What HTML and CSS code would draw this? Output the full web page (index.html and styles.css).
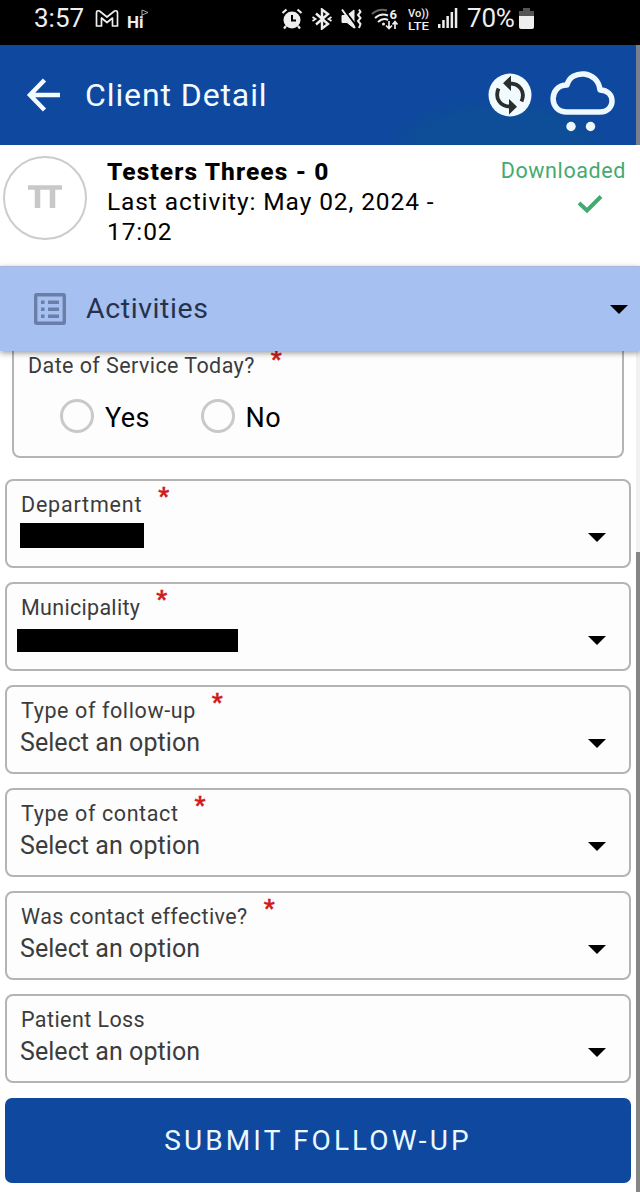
FILE: index.html
```html
<!DOCTYPE html>
<html lang="en">
<head>
<meta charset="utf-8">
<title>Client Detail</title>
<link rel="stylesheet" href="styles.css">
</head>
<body>
<div class="status">
  <span class="clock">3:57</span>
  <svg class="gmail" width="24" height="19" viewBox="0 0 24 19" fill="none" stroke="#eee" stroke-width="1.7" stroke-linejoin="round"><path d="M1.5 17V4Q1.500 1 4.500 2L12 8L19.500 2Q22.500 1 22.500 4V17H17.500V9L12 13.500L6.500 9V17Z"/></svg>
  <span class="hi">Hi<svg class="flag" width="8" height="10" viewBox="0 0 8 10" fill="none" stroke="#aaa"><path d="M1 10V1L7 3.500L1 6"/></svg></span>
  <div class="signals">
    <svg width="22" height="22" viewBox="0 0 22 22"><circle cx="11" cy="12" r="8.500" fill="#eee"/><path d="M1.500 5L5.500 1.500M20.500 5L16.500 1.500M5 18L3 20.500M17 18L19 20.500" stroke="#eee" stroke-width="2.200"/><path d="M11 7V12.500H15" fill="none" stroke="#000" stroke-width="2"/></svg>
    <svg width="20" height="22" viewBox="0 0 20 22" fill="none" stroke="#eee" stroke-width="2.400"><path d="M4 5.500L16 16L10 20.500V1.500L16 6L4 16.500"/><path d="M0.500 9L3.500 11L0.500 13M19.500 9L16.500 11L19.500 13" stroke-width="1.800"/></svg>
    <svg width="21" height="22" viewBox="0 0 21 22" fill="none" stroke="#eee"><path d="M1 7.500H6L13 2V20L6 14.500H1Z" fill="#eee"/><path d="M2.500 1L15.500 18" stroke="#000" stroke-width="2"/><path d="M1 1.500L14 20" stroke-width="2"/><path d="M18 1.500L19.500 4L17 7L19.500 10L17 13L19.500 16L18 20" stroke-width="2"/></svg>
    <svg width="28" height="23" viewBox="0 0 28 23" fill="none" stroke="#eee" stroke-width="2"><path d="M1 6Q8 0 16 2.500" stroke="#666"/><path d="M4 10Q10 4.500 17 7.500M7 14Q12 9.500 17 12"/><circle cx="12.500" cy="16" r="1.500" fill="#eee" stroke="none"/><path d="M18 13V20M15 17.500L18 20.500L21 17.500M24 21V14M21.500 16.500L24 13.500L26.500 16.500" stroke-width="1.700"/><text x="18.500" y="11" class="wifi-num">6</text></svg>
    <svg class="volte" width="22" height="28" viewBox="0 0 22 28"><text x="0" y="12" textLength="21" lengthAdjust="spacingAndGlyphs">Vo))</text><text x="0" y="25" textLength="21" lengthAdjust="spacingAndGlyphs">LTE</text></svg>
    <svg class="bars" width="20" height="21" viewBox="0 0 20 21" fill="#eee"><path d="M0 17H2.500V21H0ZM4.200 13H6.700V21H4.200ZM8.400 9H10.900V21H8.400ZM12.600 5H15.100V21H12.600ZM16.800 1H19.300V21H16.800Z"/></svg>
    <span class="percent">70%</span>
    <svg width="15" height="23" viewBox="0 0 15 23"><path d="M4 1H11V4H15V10H0V4H4Z" fill="#555"/><path d="M0 9H15V20Q15 22 13 22H2Q0 22 0 20Z" fill="#eee"/></svg>
  </div>
</div>
<header class="topbar">
  <svg class="back" width="36" height="36" viewBox="0 0 36 36" fill="none" stroke="#f2fbff" stroke-width="4.500"><path d="M19.500 3L5 18L19.500 33M4 18H35"/></svg>
  <h1>Client Detail</h1>
  <svg class="sync" width="44" height="44" viewBox="0 0 44 44"><circle cx="22" cy="22" r="21.500" fill="#f0faff"/><g fill="none" stroke="#2b2e2e" stroke-width="3.800"><path d="M21 10.500C32 10 37.500 19 33.500 28.500"/><path d="M23 33.500C12 34 6.500 25 10.500 15.500"/></g><path d="M23 2.500V18L15 10.300ZM21 26L29 33.700L21 41.500Z" fill="#2b2e2e"/></svg>
  <svg class="cloud" width="66" height="62" viewBox="0 0 66 62"><path d="M17 41H50C66 41 66 19 50 19C48 -1 21 -2 17 14C-1 14 -2 41 17 41Z" fill="none" stroke="#edf8ff" stroke-width="5.500" stroke-linejoin="round"/><circle cx="21" cy="55.500" r="4.700" fill="#edf8ff"/><circle cx="40.500" cy="55.500" r="4.700" fill="#edf8ff"/></svg>
</header>
<section class="client">
  <div class="avatar"><svg width="34" height="24" viewBox="0 0 34 24" fill="none" stroke="#c8c8c8"><path d="M0 2.500H34" stroke-width="4.500"/><path d="M9.500 2V23M24.500 2V23" stroke-width="5.500"/></svg></div>
  <div class="info">
    <div class="name">Testers Threes - 0</div>
    <div class="last">Last activity: May 02, 2024 -<br>17:02</div>
  </div>
  <div class="download">
    <span>Downloaded</span>
    <svg width="26" height="20" viewBox="0 0 26 20" fill="none" stroke="#43aa70" stroke-width="4"><path d="M2 9L10 16.500L24 2.500"/></svg>
  </div>
</section>
<section class="activities">
  <svg width="32" height="32" viewBox="0 0 32 32"><rect x="1.700" y="1.700" width="28.600" height="28.600" rx="1" fill="none" stroke="#6a7fa8" stroke-width="3.400"/><path d="M7 7.500h3.500v3.500h-3.500zM14 7.500h11v3.500h-11zM7 14.500h3.500v3.500h-3.500zM14 14.500h11v3.500h-11zM7 21.500h3.500v3.500h-3.500zM14 21.500h11v3.500h-11z" fill="#6a7fa8"/></svg>
  <h2>Activities</h2>
  <i class="caret"></i>
</section>
<main class="body">
  <form class="form">
    <div class="radio-card">
      <div class="label-row"><span class="label">Date of Service Today?</span><span class="star">*</span></div>
      <div class="options">
        <span class="option"><i class="ring"></i><span>Yes</span></span>
        <span class="option"><i class="ring"></i><span>No</span></span>
      </div>
    </div>
    <div class="field"><div class="label-row"><span class="label wide">Department</span><span class="star">*</span></div><div class="redacted short"></div><i class="caret"></i></div>
    <div class="field"><div class="label-row"><span class="label tight">Municipality</span><span class="star">*</span></div><div class="redacted long"></div><i class="caret"></i></div>
    <div class="field"><div class="label-row"><span class="label loose">Type of follow-up</span><span class="star">*</span></div><div class="value">Select an option</div><i class="caret"></i></div>
    <div class="field"><div class="label-row"><span class="label loose">Type of contact</span><span class="star">*</span></div><div class="value">Select an option</div><i class="caret"></i></div>
    <div class="field"><div class="label-row"><span class="label">Was contact effective?</span><span class="star">*</span></div><div class="value">Select an option</div><i class="caret"></i></div>
    <div class="field"><div class="label-row"><span class="label">Patient Loss</span></div><div class="value">Select an option</div><i class="caret"></i></div>
    <button class="submit" type="button">SUBMIT FOLLOW-UP</button>
  </form>
  <div class="track"><div class="thumb"></div></div>
</main>
</body>
</html>
```
FILE: styles.css
```css
* { box-sizing: border-box; }
body { margin: 0; width: 640px; height: 1192px; overflow: hidden; background: #fff; color: #000; font-family: Roboto, "Liberation Sans", sans-serif; display: flex; flex-direction: column; }
svg { display: block; flex: none; }
h1, h2 { margin: 0; font-weight: 400; }

.status { height: 45px; flex: none; background: #000; color: #eee; display: flex; align-items: flex-start; padding: 3px 106px 0 34px; font-size: 26px; line-height: 30px; }
.clock { width: 61px; }
.gmail { margin-top: 6px; }
.hi { position: relative; margin: 3px 0 0 8px; font-size: 17px; font-weight: 700; line-height: 32px; }
.flag { position: absolute; left: 14px; top: 3px; }
.signals { margin-left: auto; display: flex; align-items: flex-start; }
.signals svg { margin: 5px 9px 0 0; }
.signals svg:last-child { margin: 4px 0 0 4px; }
.signals .bars { margin-top: 4px; }
.signals .volte { margin-top: 2px; margin-right: 8px; fill: #eee; font-size: 11px; font-weight: 500; }
.wifi-num { font-size: 13px; font-weight: 700; fill: #eee; stroke: none; }
.percent { width: 48px; letter-spacing: -.2px; }

.topbar { height: 100px; flex: none; background: radial-gradient(ellipse 115px 50px at 500px 100px, #0e4d97 70%, #0e489f 100%); border-right: 4px solid #777f91; display: flex; align-items: flex-start; padding: 0 20px 0 25px; color: #f2fbff; }
.back { margin-top: 32px; }
.topbar h1 { margin: 30px 0 0 24px; font-size: 32px; line-height: 40px; letter-spacing: .9px; }
.sync { margin: 28px 18px 0 auto; }
.cloud { margin: 26px 0 0; }

.client { height: 121px; flex: none; display: flex; padding: 11px 14px 0 3px; }
.avatar { width: 84px; height: 84px; border: 2px solid #ccc; border-radius: 50%; display: flex; justify-content: center; padding-top: 27px; }
.info { margin: 1px 0 0 20px; font-size: 24.5px; line-height: 30px; }
.name { font-weight: 800; letter-spacing: 1.1px; }
.last { letter-spacing: .9px; }
.download { margin-left: auto; display: flex; flex-direction: column; align-items: flex-end; padding-top: 1px; color: #43aa70; font-size: 21.5px; line-height: 28px; letter-spacing: .6px; }
.download svg { margin: 9px 23px 0 0; }

.activities { height: 85px; flex: none; position: relative; background: #a6c0f1; border-top: 1px solid #a9b8dc; box-shadow: 0 2px 6px rgba(0,0,0,.4); display: flex; align-items: center; padding: 0 12px 0 34px; z-index: 1; }
.activities h2 { margin: -1px 0 0 20px; font-size: 28.5px; letter-spacing: .6px; color: #26324c; }
.caret { width: 0; height: 0; border: solid transparent; border-width: 9px 9px 0; border-top-color: #000; }
.activities .caret { margin-left: auto; }

.body { flex: 1; display: flex; min-height: 0; }
.form { width: 636px; padding: 0 5px; display: flex; flex-direction: column; }
.radio-card { height: 107px; margin: 0 7px 21px; border: 2px solid #b4b4b4; border-top: 0; border-radius: 0 0 8px 8px; background: #fdfdfd; padding: 0 0 0 14px; }
.label-row { display: flex; height: 28px; }
.label { font-size: 21.5px; line-height: 30px; letter-spacing: .42px; color: #3c3c3c; white-space: nowrap; }
.label.wide { letter-spacing: .8px; }
.label.loose { letter-spacing: .6px; }
.label.tight { letter-spacing: .3px; }
.star { margin: -9px 0 0 16px; font-size: 24px; line-height: 30px; font-weight: 700; color: #d11a1a; -webkit-text-stroke: .4px #d11a1a; }
.radio-card .star { margin-top: -7px; }
.options { display: flex; padding: 19px 0 0 32px; }
.option { display: flex; align-items: center; width: 140.5px; height: 36px; font-size: 27px; letter-spacing: .4px; }
.option span { padding-top: 4px; }
.ring { width: 34px; height: 34px; border: 3.5px solid #c9c9c9; border-radius: 50%; margin-right: 11px; }
.field { width: 626px; height: 89px; flex: none; margin-bottom: 14.1px; border: 2px solid #b4b4b4; border-radius: 8px; background: #fdfdfd; padding: 9px 23px 0 14px; display: grid; grid-template-columns: 1fr auto; grid-template-rows: 28px 40px; }
.field .label-row { grid-column: 1 / -1; }
.field .caret { margin-top: 15px; }
.value { font-size: 25px; line-height: 38px; color: #3c3c3c; margin-left: -1px; letter-spacing: .06px; }
.redacted { background: #000; }
.short { width: 124px; height: 25px; margin: 5px 0 0 -1px; }
.long { width: 221px; height: 23px; margin: 8px 0 0 -4px; }
.submit { width: 626px; height: 85px; flex: none; border: 0; border-radius: 7px; background: #0e489f; color: #eaf9ff; font: 400 28px Roboto, sans-serif; letter-spacing: 3.1px; }
.track { width: 4px; background: #f1f1f1; padding-top: 201px; }
.thumb { height: 640px; background: #858585; }
```
